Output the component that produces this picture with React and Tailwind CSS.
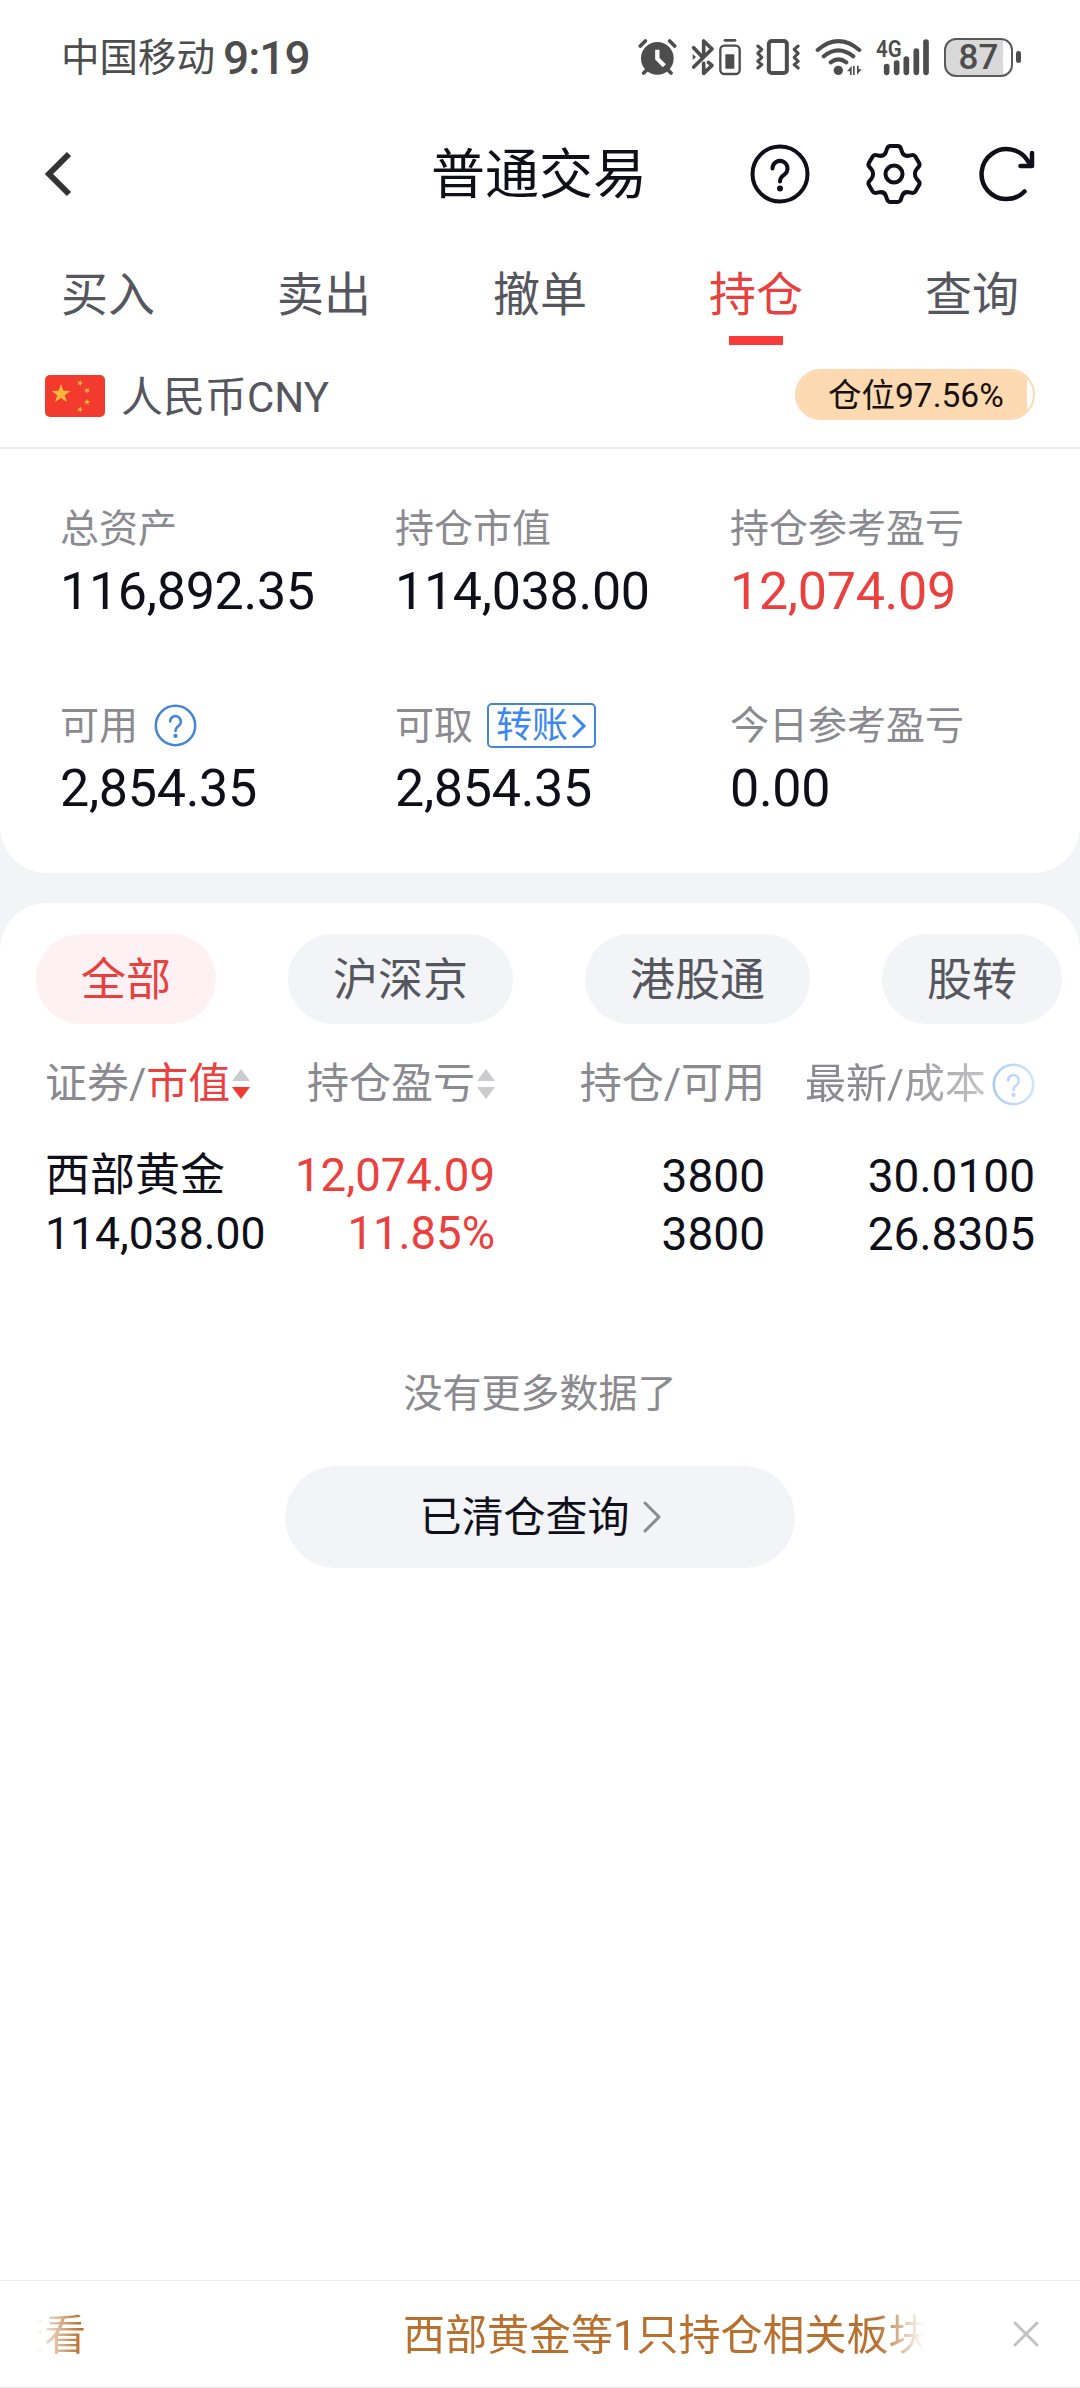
import React from 'react';
import { clsx } from 'clsx';

const tabs = ['买入', '卖出', '撤单', '持仓', '查询'];
const markets = ['全部', '沪深京', '港股通', '股转'];

const positions = [
  {
    name: '西部黄金',
    marketValue: '114,038.00',
    profit: '12,074.09',
    profitRate: '11.85%',
    amount: '3800',
    available: '3800',
    price: '30.0100',
    cost: '26.8305',
  },
];

const QuestionIcon = ({ className, strokeWidth }) => (
  <svg viewBox="0 0 60 60" fill="none" stroke="currentColor" strokeWidth={strokeWidth} strokeLinecap="round" className={className}>
    <circle cx="30" cy="30" r="27.5" />
    <path d="M22.500 24.500a7.500 7.500 0 1 1 11.800 6.100C31.500 32.500 30 33.700 30 37.500" />
    <circle cx="30" cy="44.500" r="3" fill="currentColor" stroke="none" />
  </svg>
);

const GearIcon = () => (
  <svg viewBox="0 0 60 62" fill="none" stroke="currentColor" strokeWidth="4" strokeLinejoin="round" className="h-[62px] w-[60px]">
    <path d="M26.500 3h7c2 0 3 1 3.600 3l.9 2.800c1 3 3.500 4.500 6.600 3.900l3.300-.6c1.600-.3 2.800.2 3.600 1.600l3.600 6.200c.8 1.500.6 2.800-.5 4l-2 2.300c-2.200 2.600-2.200 7 0 9.600l2 2.300c1.100 1.200 1.300 2.500.5 4l-3.600 6.200c-.8 1.400-2 1.900-3.600 1.600l-3.300-.6c-3.100-.6-5.600.9-6.600 3.900l-.9 2.800c-.6 2-1.600 3-3.600 3h-7c-2 0-3-1-3.600-3l-.9-2.800c-1-3-3.500-4.500-6.600-3.900l-3.300.6c-1.600.3-2.800-.2-3.600-1.600l-3.600-6.200c-.8-1.500-.6-2.800.5-4l2-2.300c2.200-2.600 2.200-7 0-9.600l-2-2.300c-1.100-1.200-1.300-2.500-.5-4l3.600-6.200c.8-1.400 2-1.900 3.600-1.600l3.300.6c3.100.6 5.600-.9 6.600-3.900l.9-2.800c.6-2 1.600-3 3.600-3Z" />
    <circle cx="30" cy="31" r="8.500" />
  </svg>
);

const RefreshIcon = () => (
  <svg viewBox="0 0 60 60" fill="none" stroke="currentColor" strokeWidth="4.500" strokeLinecap="round" strokeLinejoin="round" className="size-[60px]">
    <path d="M46.500 47.500A25 25 0 1 1 50 17.200L53 20.500" />
    <path d="M54 9v13H42.500" />
  </svg>
);

const SortIcon = ({ active }) => (
  <svg viewBox="0 0 18 30" className="ml-[2px] h-[30px] w-[18px]">
    <path d="M9 0l9 12H0z" fill="#cbcbcd" />
    <path d="M9 30l9-12H0z" fill={active ? '#f03a2e' : '#cbcbcd'} />
  </svg>
);

const star = '0,-10 2.400,-3.200 9.500,-3.100 3.800,1.200 5.900,8.100 0,4 -5.900,8.100 -3.800,1.200 -9.500,-3.100 -2.400,-3.200';

const ChinaFlag = () => (
  <svg viewBox="0 0 60 42" className="h-[42px] w-[60px] rounded-[5px] bg-[#f23a2e]" fill="#fbb93c">
    <polygon points={star} transform="translate(16 19)" />
    <polygon points={star} transform="translate(35 8) rotate(20) scale(.33)" />
    <polygon points={star} transform="translate(42 15.500) rotate(40) scale(.33)" />
    <polygon points={star} transform="translate(42 27) scale(.33)" />
    <polygon points={star} transform="translate(35 34.500) rotate(20) scale(.33)" />
  </svg>
);

function StatusBar() {
  return (
    <div className="flex h-[114px] items-center justify-between pr-[59px] pl-[61px] text-[#4d4d4d]">
      <div className="flex items-center">
        <span className="pt-[2px] text-[38.500px] leading-none">中国移动</span>
        <span className="ml-[8px] pt-[2px] text-[46px] leading-none font-medium tracking-[-1px]">9:19</span>
      </div>
      <div className="flex items-center gap-[14px]">
        {/* alarm */}
        <svg viewBox="54 54 117 114" className="h-[38px] w-[39px]" fill="none" stroke="currentColor" strokeWidth="11" strokeLinecap="round">
          <circle cx="112" cy="115" r="49" fill="currentColor" stroke="none" />
          <path d="M61 78l15-15M149 63l15 15M71 159l12-12M153 159l-12-12" />
          <path d="M112 89v27l21 21" stroke="#fff" strokeWidth="13" strokeLinecap="butt" />
        </svg>
        {/* bluetooth + device battery */}
        <svg viewBox="212 54 150 114" className="h-[38px] w-[50px]" fill="none" stroke="currentColor" strokeWidth="11" strokeLinecap="round" strokeLinejoin="round">
          <path d="M220 83l26 28M220 141l55-54-25-24v38M264 127l11 9-25 24v-30" />
          <path d="M217 102v18l10-9z" fill="currentColor" stroke="none" />
          <rect x="300" y="77" width="58" height="85" rx="12" strokeWidth="7" />
          <path d="M314 61h30" strokeWidth="8" />
          <rect x="315" y="103" width="27" height="43" rx="3" fill="currentColor" stroke="none" />
        </svg>
        {/* vibrate */}
        <svg viewBox="404 54 137 114" className="h-[38px] w-[46px]" fill="none" stroke="currentColor" strokeWidth="9" strokeLinecap="round" strokeLinejoin="round">
          <rect x="445" y="63" width="54" height="96" rx="9" strokeWidth="12" />
          <path d="M412 78l12 10-12 12 12 12-12 12 12 10-12 10M533 78l-12 10 12 12-12 12 12 12-12 10 12 10" />
        </svg>
        {/* wifi */}
        <svg viewBox="582 54 141 114" className="h-[38px] w-[47px]" fill="none" stroke="currentColor" strokeWidth="12" strokeLinecap="round">
          <path d="M590 90Q652 37 715 90M608 109Q652 73 697 109M629 127Q652 109 676 127" />
          <circle cx="652" cy="151" r="14" fill="currentColor" stroke="none" />
          <path d="M678 154l14-16v27h-5v-11zM722 148l-14 16v-27h5v11zM696 138h5v27h-5z" fill="currentColor" stroke="none" />
        </svg>
        {/* mobile signal */}
        <svg viewBox="766 54 162 114" className="h-[38px] w-[54px] overflow-visible" fill="none" stroke="currentColor" strokeWidth="17" strokeLinecap="round">
          <text x="766" y="110" fill="currentColor" stroke="none" fontSize="74" fontWeight="600" textLength="77" lengthAdjust="spacingAndGlyphs">4G</text>
          <path d="M798 140v17M828 129v28M857 117v40M887 93v64M916 66v91" />
        </svg>
        <div className="flex items-center gap-[3px]">
          <div className="flex h-[39px] w-[69px] items-center justify-center rounded-[12px] border-2 border-[#5a5a5a] bg-linear-to-r from-[#d9d9d9] from-88% to-white to-88% text-[35px] leading-none font-medium">
            87
          </div>
          <div className="h-[12px] w-[5px] rounded-full bg-[#4d4d4d]" />
        </div>
      </div>
    </div>
  );
}

function Header() {
  return (
    <div className="grid h-[120px] grid-cols-[1fr_auto_1fr] items-center pr-[42px] pl-[44px] text-[#0f0f1a]">
      <svg viewBox="0 0 28 46" fill="none" stroke="#333" strokeWidth="6" className="h-[46px] w-[28px]">
        <path d="M25 3L5 23l20 20" />
      </svg>
      <h1 className="mr-[4px] pt-[3px] text-[54px] leading-[60px]">普通交易</h1>
      <div className="flex items-center justify-end gap-[54px]">
        <QuestionIcon className="size-[60px]" strokeWidth="4" />
        <GearIcon />
        <RefreshIcon />
      </div>
    </div>
  );
}

function TabBar() {
  return (
    <div className="grid h-[111px] grid-cols-5 pt-[31px]">
      {tabs.map((tab) => {
        const active = tab === '持仓';
        return (
          <div key={tab} className="flex flex-col items-center">
            <span className={clsx('text-[47px] leading-[60px]', active ? 'text-[#e8403e]' : 'text-[#55565e]')}>{tab}</span>
            {active && <span className="mt-[11px] h-[9px] w-[54px] bg-[#f93a3a]" />}
          </div>
        );
      })}
    </div>
  );
}

function CurrencyBar() {
  return (
    <div className="flex h-[104px] items-center justify-between border-b-2 border-[#ececee] px-[45px]">
      <div className="flex items-center gap-[16px]">
        <ChinaFlag />
        <span className="pt-[3px] text-[42px] leading-[60px] text-[#55565e]">人民币CNY</span>
      </div>
      <div className="mb-[3px] h-[51px] w-[240px] overflow-hidden rounded-full border-2 border-[#fdd9b1]">
        <div className="h-full w-[97.56%] bg-[#fdd9b1] pl-[31px] text-[33.500px] leading-[49px] whitespace-nowrap text-[#17100a]">
          仓位97.56%
        </div>
      </div>
    </div>
  );
}

function SummaryItem({ label, value, extra, red }) {
  return (
    <div>
      <div className="flex h-[62px] items-center pb-[3px] text-[39px] leading-[59px] text-[#8a8a90]">
        <span>{label}</span>
        {extra}
      </div>
      <div className={clsx('text-[52px] leading-[60px] tracking-[-0.3px]', red ? 'text-[#ea403e]' : 'text-[#0f0f1a]')}>{value}</div>
    </div>
  );
}

function Summary() {
  return (
    <div className="grid grid-cols-[335px_335px_1fr] gap-y-[75px] pt-[51px] pb-[54px] pl-[60px]">
      <SummaryItem label="总资产" value="116,892.35" />
      <SummaryItem label="持仓市值" value="114,038.00" />
      <SummaryItem label="持仓参考盈亏" value="12,074.09" red />
      <SummaryItem
        label="可用"
        value="2,854.35"
        extra={<QuestionIcon className="mb-[2px] ml-[16px] size-[43px] text-[#4485d4]" strokeWidth="3.500" />}
      />
      <SummaryItem
        label="可取"
        value="2,854.35"
        extra={
          <span className="mb-[2px] ml-[14px] flex h-[45px] w-[109px] items-center rounded-[5px] border-2 border-[#4485d8] pl-[7px] text-[36px] leading-none text-[#3b87ec]">
            转账
            <svg viewBox="0 0 16 26" fill="none" stroke="currentColor" strokeWidth="3" className="ml-[3px] h-[26px] w-[16px]">
              <path d="M2 2l11 11L2 24" />
            </svg>
          </span>
        }
      />
      <SummaryItem label="今日参考盈亏" value="0.00" />
    </div>
  );
}

function PositionTable() {
  return (
    <div className="px-[45px]">
      <div className="grid h-[118px] grid-cols-[220px_230px_270px_270px] items-center pt-[2px] text-[42px] leading-[60px] text-[#8a8a90]">
        <div className="flex items-center whitespace-nowrap">
          证券/<span className="text-[#ea403e]">市值</span>
          <SortIcon active />
        </div>
        <div className="flex items-center justify-end whitespace-nowrap">
          持仓盈亏
          <SortIcon />
        </div>
        <div className="text-right">持仓/可用</div>
        <div className="flex items-center justify-end whitespace-nowrap [mask-image:linear-gradient(to_right,black_46%,rgba(0,0,0,0.22))]">
          <span className="text-[41px]">最新/成本</span>
          <QuestionIcon className="ml-[6px] size-[43px] text-[#3b8bee]" strokeWidth="3.500" />
        </div>
      </div>
      {positions.map((p) => (
        <div key={p.name} className="mt-[5px] grid grid-cols-[220px_230px_270px_270px] text-[46px] leading-[58px] text-[#0f0f1a]">
          <div>
            <div className="text-[45px]">{p.name}</div>
            <div className="text-[44.500px]">{p.marketValue}</div>
          </div>
          <div className="text-right text-[45.500px] text-[#ea403e]">
            <div>{p.profit}</div>
            <div>{p.profitRate}</div>
          </div>
          <div className="text-right">
            <div>{p.amount}</div>
            <div>{p.available}</div>
          </div>
          <div className="text-right">
            <div>{p.price}</div>
            <div>{p.cost}</div>
          </div>
        </div>
      ))}
    </div>
  );
}

function NoticeBar() {
  return (
    <div className="flex h-[108px] items-center border-y border-[#eaeaea] text-[42px] leading-[60px] text-[#b8702f]">
      <div className="ml-[36px] flex w-[888px] gap-[317px] overflow-hidden pt-[3px] whitespace-nowrap [mask-image:linear-gradient(to_right,transparent,black_45px,black_840px,transparent_888px)]">
        <span className="-ml-[34px] shrink-0">查看</span>
        <span className="shrink-0">西部黄金等1只持仓相关板块</span>
      </div>
      <svg viewBox="0 0 26 26" stroke="#c2c2c4" strokeWidth="3" strokeLinecap="round" className="ml-[89px] size-[26px]">
        <path d="M2 2l22 22M24 2L2 24" />
      </svg>
    </div>
  );
}

export default function App() {
  return (
    <div lang="zh-CN" className="flex h-[2388px] w-[1080px] flex-col overflow-hidden bg-[#f3f4f8] font-[Roboto,'Noto_Sans_CJK_SC',sans-serif]">
      <div className="rounded-b-[47px] bg-white">
        <StatusBar />
        <Header />
        <TabBar />
        <CurrencyBar />
        <Summary />
      </div>

      <div className="mt-[30px] flex flex-1 flex-col rounded-t-[47px] bg-white">
        <div className="flex gap-[72px] pt-[31px] pl-[36px]">
          {markets.map((m, i) => (
            <div
              key={m}
              className={clsx(
                'h-[90px] rounded-full px-[45px] text-[45px] leading-[94px]',
                i === 0 ? 'bg-[#fef1f3] text-[#e8403e]' : 'bg-[#f3f4f8] text-[#55565e]'
              )}
            >
              {m}
            </div>
          ))}
        </div>
        <PositionTable />
        <p className="mt-[101px] text-center text-[39px] leading-[60px] text-[#8a8a90]">没有更多数据了</p>
        <div className="mx-auto mt-[42px] flex h-[102px] w-[510px] items-center justify-center rounded-full bg-[#f3f4f8] text-[42px] leading-[60px] text-[#0f0f1a]">
          <span className="pt-[2px]">已清仓查询</span>
          <svg viewBox="0 0 18 32" fill="none" stroke="#8a8a90" strokeWidth="3" strokeLinecap="round" strokeLinejoin="round" className="ml-[13px] h-[32px] w-[18px]">
            <path d="M2 2l14 14L2 30" />
          </svg>
        </div>
        <div className="flex-1" />
        <NoticeBar />
      </div>
    </div>
  );
}
